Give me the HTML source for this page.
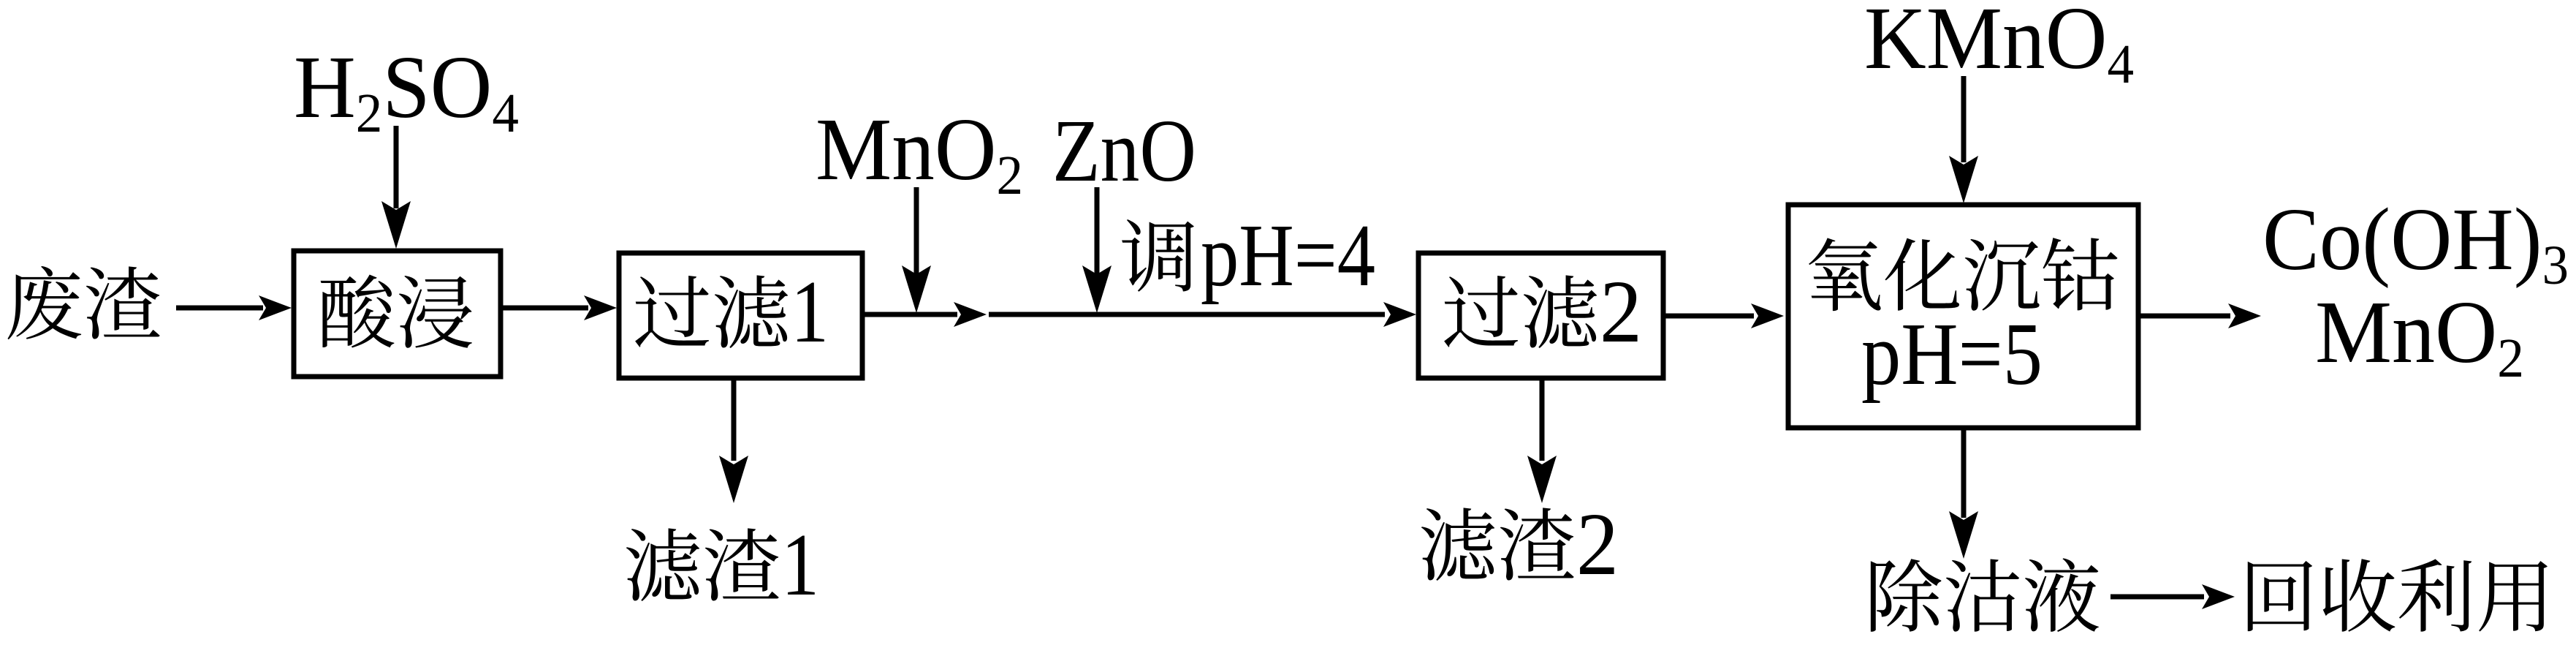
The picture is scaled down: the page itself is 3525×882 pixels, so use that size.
<!DOCTYPE html>
<html><head><meta charset="utf-8"><style>
html,body{margin:0;padding:0;background:#fff;}
svg{display:block;}
.c{font-family:"Noto Serif CJK SC","Liberation Serif",serif;font-size:108px;}
.l{font-family:"Liberation Serif",serif;font-size:122px;}
</style></head><body>
<svg width="3525" height="882" viewBox="0 0 3525 882" xmlns="http://www.w3.org/2000/svg">
<g fill="none" stroke="#000" stroke-width="7">
<rect x="402" y="343" width="283" height="172"/>
<rect x="847" y="346" width="333" height="171"/>
<rect x="1941" y="346" width="335" height="171"/>
<rect x="2447" y="280" width="479" height="305"/>
</g>
<g stroke="#000" stroke-width="7">
<line x1="241" y1="421" x2="360" y2="421"/>
<line x1="688" y1="421" x2="805" y2="421"/>
<line x1="1183" y1="430" x2="1310" y2="430"/>
<line x1="1353" y1="430" x2="1895" y2="430"/>
<line x1="2279" y1="432" x2="2400" y2="432"/>
<line x1="2929" y1="432" x2="3052" y2="432"/>
<line x1="2888" y1="816" x2="3016" y2="816"/>
<line x1="542" y1="172" x2="542" y2="285"/>
<line x1="1004" y1="520" x2="1004" y2="630"/>
<line x1="1254" y1="256" x2="1254" y2="375"/>
<line x1="1501" y1="256" x2="1501" y2="375"/>
<line x1="2110" y1="520" x2="2110" y2="630"/>
<line x1="2687" y1="104" x2="2687" y2="222"/>
<line x1="2687" y1="588" x2="2687" y2="708"/>
</g>
<g fill="#000">
<polygon points="399,421 354,404 364,421 354,438"/>
<polygon points="844,421 799,404 809,421 799,438"/>
<polygon points="1350,430 1305,413 1315,430 1305,447"/>
<polygon points="1938,430 1893,413 1903,430 1893,447"/>
<polygon points="2441,432 2396,415 2406,432 2396,449"/>
<polygon points="3094,432 3049,415 3059,432 3049,449"/>
<polygon points="3058,816 3013,799 3023,816 3013,833"/>
<polygon points="542,340 522,275 542,287 562,275"/>
<polygon points="1004,688 984,623 1004,635 1024,623"/>
<polygon points="1254,428 1234,363 1254,375 1274,363"/>
<polygon points="1501,428 1481,363 1501,375 1521,363"/>
<polygon points="2110,688 2090,623 2110,635 2130,623"/>
<polygon points="2687,278 2667,213 2687,225 2707,213"/>
<polygon points="2687,764 2667,699 2687,711 2707,699"/>
</g>
<g fill="#000">
<text class="c" x="6" y="455">废渣</text>
<text class="c" x="434" y="467">酸浸</text>
<text class="c" x="866" y="467">过滤</text><text class="l" x="1082" y="467" textLength="52" lengthAdjust="spacingAndGlyphs">1</text>
<text class="c" x="853" y="813">滤渣</text><text class="l" x="1069" y="813" textLength="52" lengthAdjust="spacingAndGlyphs">1</text>
<text class="c" x="1973" y="467">过滤</text><text class="l" x="2189" y="467" textLength="58" lengthAdjust="spacingAndGlyphs">2</text>
<text class="c" x="1941" y="785">滤渣</text><text class="l" x="2157" y="785" textLength="58" lengthAdjust="spacingAndGlyphs">2</text>
<text class="c" x="2469" y="416">氧化沉钴</text>
<text class="c" x="2551" y="855">除沽液</text>
<text class="c" x="3064" y="855">回收利用</text>
<text class="c" x="1532" y="390">调</text><text class="l" x="1643" y="390" textLength="239" lengthAdjust="spacingAndGlyphs">pH=4</text>
<text class="l" x="2547" y="525" textLength="248" lengthAdjust="spacingAndGlyphs">pH=5</text>
<text class="l" x="402" y="160" textLength="308" lengthAdjust="spacingAndGlyphs">H<tspan font-size="76" dy="20">2</tspan><tspan dy="-20">SO</tspan><tspan font-size="76" dy="20">4</tspan></text>
<text class="l" x="1116" y="245" textLength="284" lengthAdjust="spacingAndGlyphs">MnO<tspan font-size="76" dy="20">2</tspan></text>
<text class="l" x="1440" y="247" textLength="197" lengthAdjust="spacingAndGlyphs">ZnO</text>
<text class="l" x="2551" y="93" textLength="369" lengthAdjust="spacingAndGlyphs">KMnO<tspan font-size="76" dy="20">4</tspan></text>
<text class="l" x="3096" y="368" textLength="419" lengthAdjust="spacingAndGlyphs">Co(OH)<tspan font-size="76" dy="20">3</tspan></text>
<text class="l" x="3168" y="495" textLength="286" lengthAdjust="spacingAndGlyphs">MnO<tspan font-size="76" dy="20">2</tspan></text>
</g>
</svg>
</body></html>
